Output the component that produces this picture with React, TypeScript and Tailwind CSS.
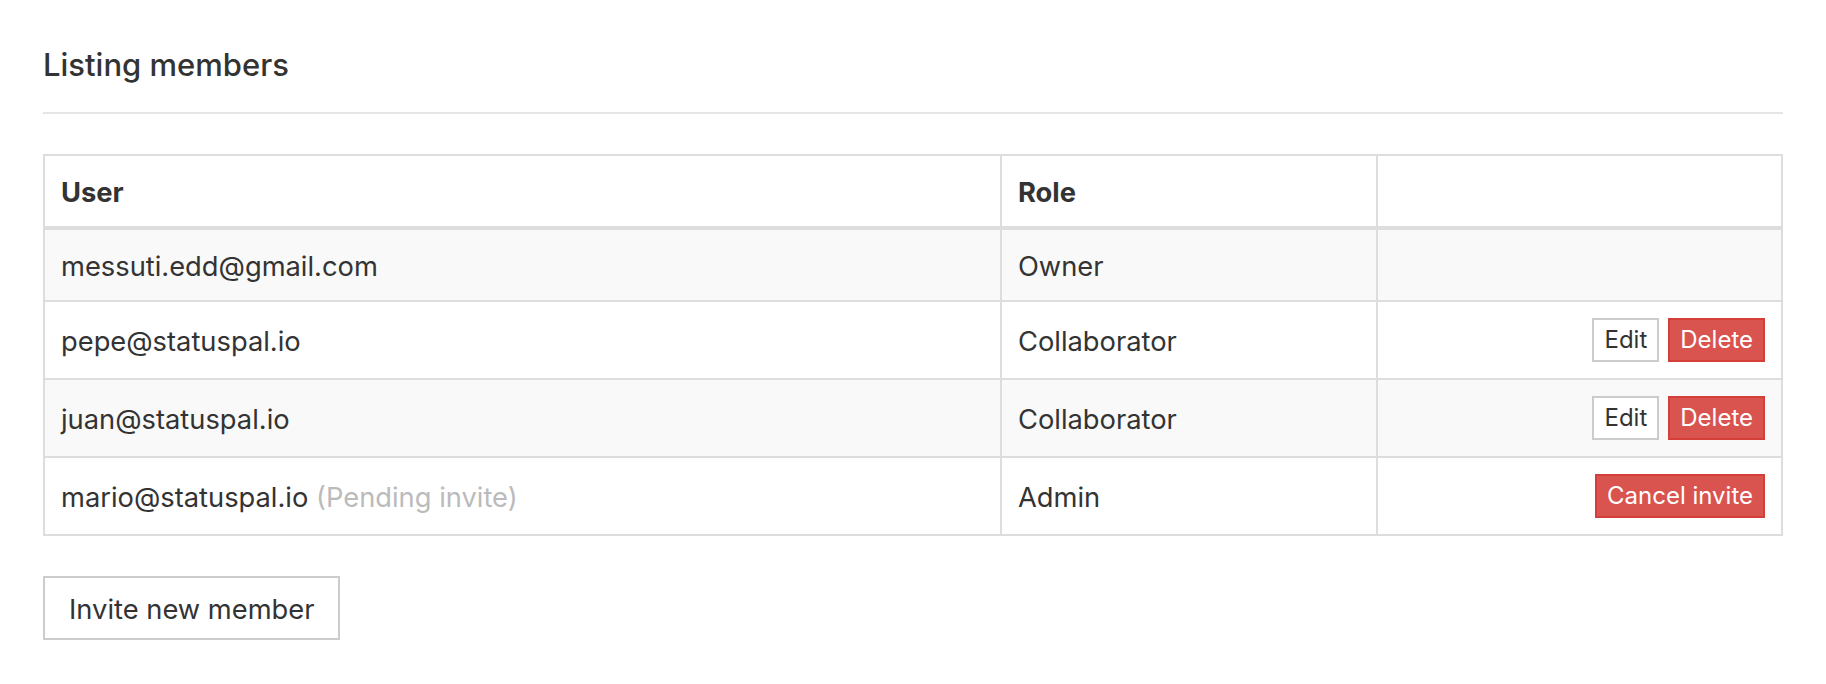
import React from 'react'

type Member = {
  email: string
  role: string
  pending?: boolean
  actions: 'none' | 'edit' | 'cancel'
}

const members: Member[] = [
  { email: 'messuti.edd@gmail.com', role: 'Owner', actions: 'none' },
  { email: 'pepe@statuspal.io', role: 'Collaborator', actions: 'edit' },
  { email: 'juan@statuspal.io', role: 'Collaborator', actions: 'edit' },
  { email: 'mario@statuspal.io', role: 'Admin', pending: true, actions: 'cancel' },
]

function RowActions({ kind }: { kind: Member['actions'] }) {
  if (kind === 'none') return null
  if (kind === 'cancel') {
    return (
      <div className="flex justify-end">
        <button className="h-[44px] px-[10px] bg-[#d9534f] border-2 border-[#d43f3a] text-white text-[24px] leading-[40px]">
          Cancel invite
        </button>
      </div>
    )
  }
  return (
    <div className="flex justify-end gap-[9px]">
      <button className="h-[44px] px-[10px] bg-white border-2 border-[#ccc] text-[#333] text-[24px] leading-[40px]">Edit</button>
      <button className="h-[44px] px-[10px] bg-[#d9534f] border-2 border-[#d43f3a] text-white text-[24px] leading-[40px]">Delete</button>
    </div>
  )
}

export default function App() {
  return (
    <div className="min-h-screen bg-white px-[43px] pt-[45px] text-[#333] font-['Inter',sans-serif]">
      {/* Page header */}
      <h2 className="text-[31px] font-medium leading-[40px]">Listing members</h2>
      <div className="mt-[27px] border-t-2 border-[#e5e5e5]" />

      {/* Members table */}
      <table className="mt-[40px] w-full table-fixed border-collapse border-2 border-[#ddd] text-[27.3px]">
        <thead>
          <tr>
            <th className="w-[957px] border-2 border-b-4 border-[#ddd] px-[16px] pt-[18px] pb-[14px] text-left font-bold leading-[38px]">User</th>
            <th className="w-[376px] border-2 border-b-4 border-[#ddd] px-[16px] pt-[18px] pb-[14px] text-left font-bold leading-[38px]">Role</th>
            <th className="border-2 border-b-4 border-[#ddd] px-[16px] pt-[18px] pb-[14px]" />
          </tr>
        </thead>
        <tbody>
          {members.map((m, i) => (
            <tr key={m.email} className={i % 2 === 0 ? 'bg-[#f9f9f9]' : 'bg-white'}>
              <td className="border-2 border-[#ddd] px-[16px] pt-[18px] pb-[14px] leading-[38px]">
                {m.email}
                {m.pending && <span className="text-[#bbb]"> (Pending invite)</span>}
              </td>
              <td className="border-2 border-[#ddd] px-[16px] pt-[18px] pb-[14px] leading-[38px]">{m.role}</td>
              <td className="border-2 border-[#ddd] px-[16px] py-[16px] leading-[38px]">
                <RowActions kind={m.actions} />
              </td>
            </tr>
          ))}
        </tbody>
      </table>

      <button className="mt-[40px] h-[64px] px-[24px] pt-[4px] border-2 border-[#ccc] bg-white text-[27.3px] text-[#333] leading-[40px]">
        Invite new member
      </button>
    </div>
  )
}
